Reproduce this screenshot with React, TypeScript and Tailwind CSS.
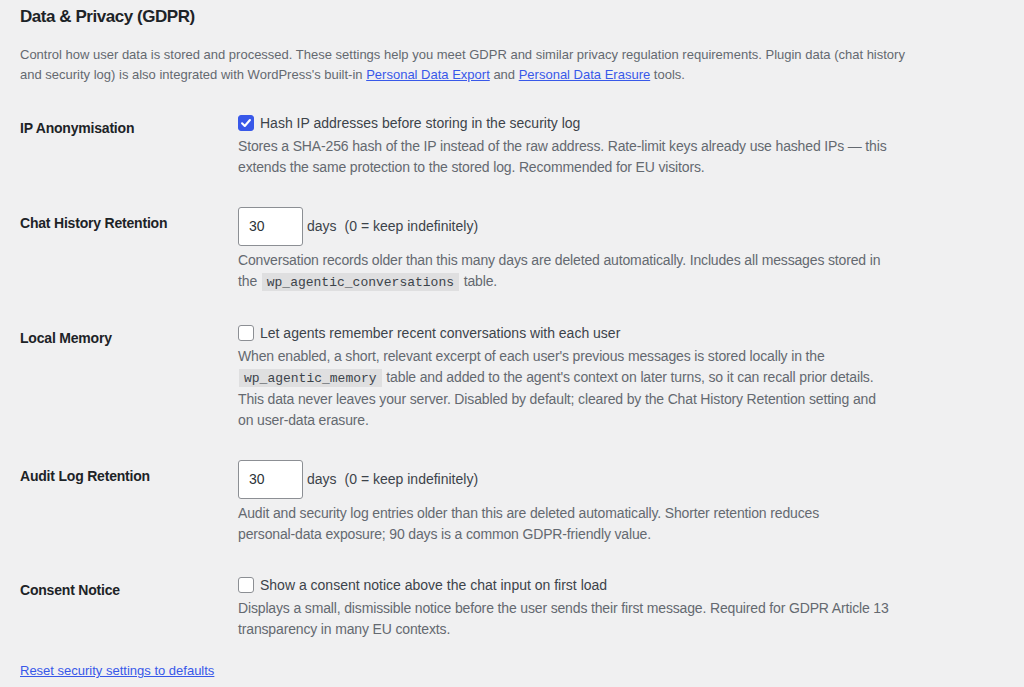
import React from 'react';

function Check({ checked }: { checked?: boolean }) {
  if (checked) {
    return (
      <span className="flex h-4 w-4 shrink-0 items-center justify-center rounded-[3px] border border-[#3858e9] bg-[#3858e9]">
        <svg viewBox="0 0 16 16" className="h-3.5 w-3.5" fill="none" stroke="#ffffff" strokeWidth="2.4" strokeLinecap="round" strokeLinejoin="round">
          <path d="M3.5 8.4 6.6 11.4 12.5 4.6" />
        </svg>
      </span>
    );
  }
  return <span className="h-4 w-4 shrink-0 rounded-[3px] border border-[#8c8f94] bg-white" />;
}

function Code({ children }: { children: React.ReactNode }) {
  return (
    <code className="mx-[1px] bg-[rgba(0,0,0,0.07)] px-[5px] pt-[2px] pb-[1px] font-['Liberation_Mono',monospace] text-[13px] tracking-normal text-[#3c434a]">
      {children}
    </code>
  );
}

function Row({ label, input, children }: { label: string; input?: boolean; children: React.ReactNode }) {
  return (
    <div className="flex">
      <div className="w-[218px] shrink-0 py-5 pr-2.5 text-[14px] leading-[1.3] font-bold tracking-[-0.2px] text-[#1d2327]">
        {label}
      </div>
      <div className={input ? 'flex-1 pt-[13px] pb-[16px] pr-[28px]' : 'flex-1 pt-[15px] pb-[16px] pr-[28px]'}>{children}</div>
    </div>
  );
}

function Desc({ children }: { children: React.ReactNode }) {
  return <p className="mt-1 text-[14px] leading-[21px] tracking-[-0.15px] text-[#646970]">{children}</p>;
}

function CheckLine({ checked, text }: { checked?: boolean; text: string }) {
  return (
    <label className="flex items-center gap-1.5 text-[14px] leading-[18px] text-[#3c434a]">
      <Check checked={checked} />
      <span>{text}</span>
    </label>
  );
}

function DaysLine({ value }: { value: string }) {
  return (
    <div className="flex items-center text-[14px] text-[#3c434a]">
      <div className="flex h-[39px] w-[65px] items-center rounded-[3px] border border-[#8c8f94] bg-white pl-[10px] text-[14px] text-[#2c3338]">
        {value}
      </div>
      <span className="ml-1">days</span>
      <span className="ml-2">(0 = keep indefinitely)</span>
    </div>
  );
}

export default function App() {
  return (
    <div className="min-h-screen bg-[#f0f0f1] font-['Liberation_Sans',Arial,sans-serif] text-[#3c434a]">
      <div className="w-[920px] pl-5 pt-[6px]">
        <h2 className="text-[17px] leading-[22px] font-bold tracking-[-0.45px] text-[#1d2327]">
          Data &amp; Privacy (GDPR)
        </h2>
        <p className="mt-[17px] text-[13px] leading-[19.5px] text-[#646970]">
          Control how user data is stored and processed. These settings help you meet GDPR and similar privacy regulation requirements. Plugin data (chat history and security log) is also integrated with WordPress's built-in{' '}
          <a href="#" className="text-[#3858e9] underline">Personal Data Export</a> and{' '}
          <a href="#" className="text-[#3858e9] underline">Personal Data Erasure</a> tools.
        </p>

        <div className="mt-[15px]">
          <Row label="IP Anonymisation">
            <CheckLine checked text="Hash IP addresses before storing in the security log" />
            <Desc>
              Stores a SHA-256 hash of the IP instead of the raw address. Rate-limit keys already use hashed IPs — this extends the same protection to the stored log. Recommended for EU visitors.
            </Desc>
          </Row>

          <Row label="Chat History Retention" input>
            <DaysLine value="30" />
            <Desc>
              Conversation records older than this many days are deleted automatically. Includes all messages stored in the <Code>wp_agentic_conversations</Code> table.
            </Desc>
          </Row>

          <Row label="Local Memory">
            <CheckLine text="Let agents remember recent conversations with each user" />
            <Desc>
              When enabled, a short, relevant excerpt of each user's previous messages is stored locally in the <Code>wp_agentic_memory</Code> table and added to the agent's context on later turns, so it can recall prior details. This data never leaves your server. Disabled by default; cleared by the Chat History Retention setting and on user-data erasure.
            </Desc>
          </Row>

          <Row label="Audit Log Retention" input>
            <DaysLine value="30" />
            <Desc>
              Audit and security log entries older than this are deleted automatically. Shorter retention reduces <span className="whitespace-nowrap">personal-data</span> exposure; 90 days is a common GDPR-friendly value.
            </Desc>
          </Row>

          <Row label="Consent Notice">
            <CheckLine text="Show a consent notice above the chat input on first load" />
            <Desc>
              Displays a small, dismissible notice before the user sends their first message. Required for GDPR Article 13 transparency in many EU contexts.
            </Desc>
          </Row>
        </div>

        <p className="mt-[5px] text-[13px] leading-[19.5px]">
          <a href="#" className="text-[#3858e9] underline">Reset security settings to defaults</a>
        </p>
      </div>
    </div>
  );
}
